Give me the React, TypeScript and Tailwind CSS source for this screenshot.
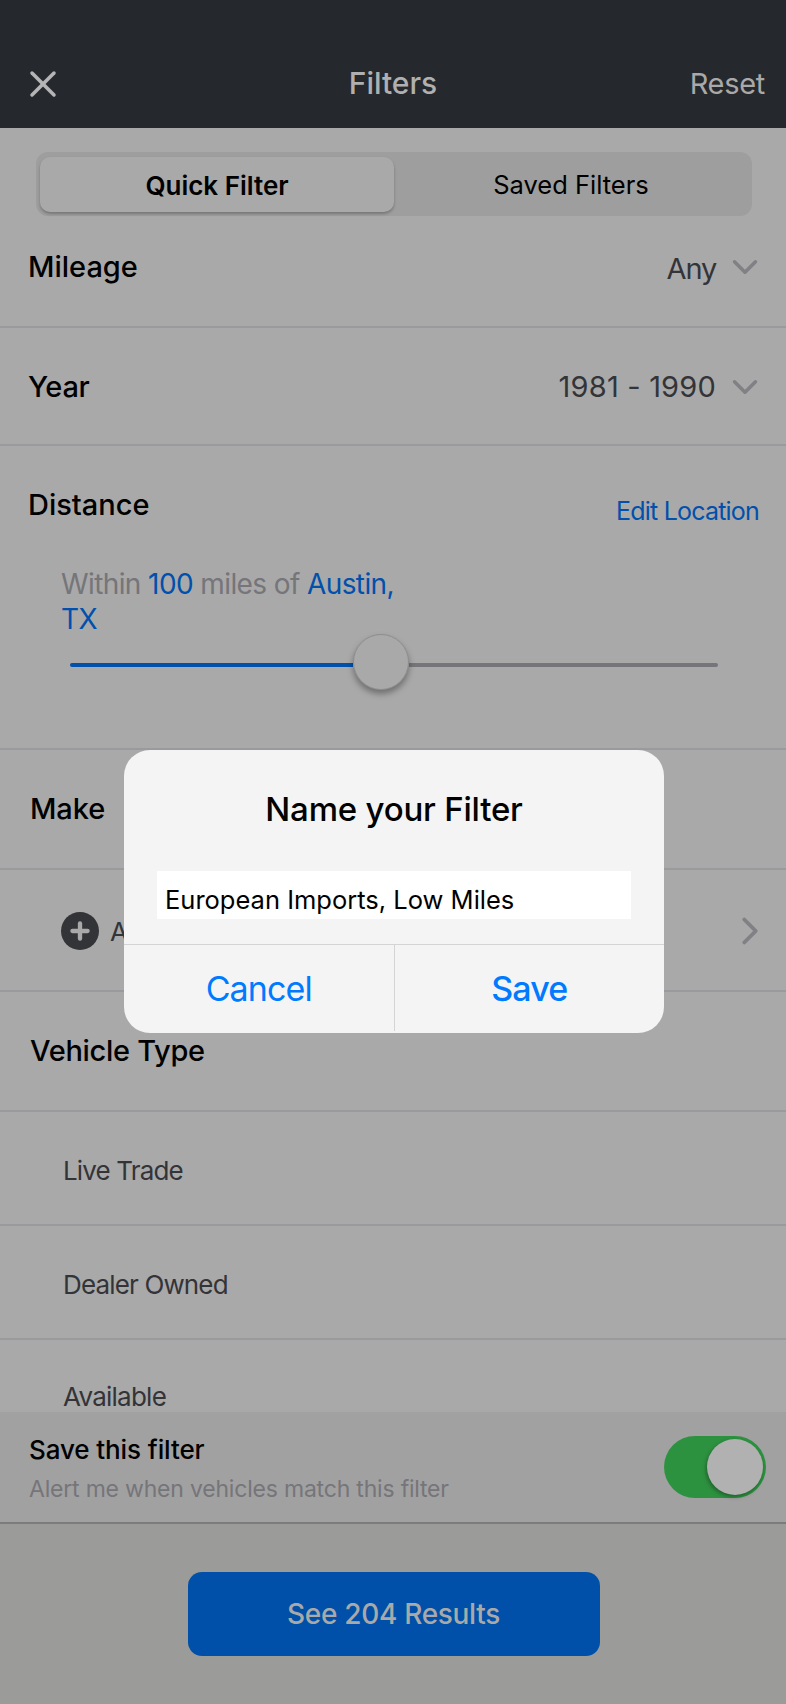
import { ChevronDown, ChevronRight, X, Plus } from "lucide-react";

function SubRow({ label, shifted }: { label: string; shifted?: boolean }) {
  return (
    <div className={shifted ? "flex h-[114px] shrink-0 items-center border-b-2 border-[#9a9a9e] pl-[63px] pt-[4px] text-[26px] tracking-[-0.85px] text-[#333438]" : "flex h-[114px] shrink-0 items-center border-b-2 border-[#9a9a9e] pl-[63px] text-[26px] tracking-[-0.75px] text-[#333438]"}>
      {label}
    </div>
  );
}

export default function App() {
  return (
    <div className="relative flex h-[1704px] w-[786px] flex-col overflow-hidden bg-[#a9a9a9] font-['Inter',sans-serif]">
      <header className="flex h-[128px] shrink-0 items-center justify-between bg-[#25282d] pl-[21px] pr-[21px] pt-[39px]">
        <div className="w-[110px]">
          <X size={44} strokeWidth={1.9} className="text-[#b5b5b5]" />
        </div>
        <span className="text-[30px] font-[450] text-[#b0b0b0]">Filters</span>
        <span className="w-[110px] text-right text-[29px] tracking-[-0.3px] text-[#a9a9a9]">Reset</span>
      </header>

      <main className="min-h-0 flex-1 overflow-hidden">
        <div className="ml-[36px] mr-[34px] mt-[24px] flex h-[64px] items-center rounded-[12px] bg-[#9e9e9e] px-[4px]">
          <div className="flex h-[55px] w-[354px] items-center justify-center rounded-[10px] bg-[#a9a9a9] pt-[3px] text-[26px] font-semibold text-black shadow-[0_2px_3px_rgba(0,0,0,0.25)]">
            Quick Filter
          </div>
          <div className="flex flex-1 items-center justify-center pt-[3px] text-[25.5px] text-black">Saved Filters</div>
        </div>

        <div className="flex h-[112px] items-center justify-between border-b-2 border-[#9a9a9e] pb-[8px] pl-[28px] pr-[20px]">
          <span className="text-[29px] font-[450] text-black">Mileage</span>
          <div className="flex items-center gap-[8px]">
            <span className="pt-[3px] text-[29px] tracking-[-1.2px] text-[#333438]">Any</span>
            <ChevronDown size={42} strokeWidth={2} className="text-[#808085]" />
          </div>
        </div>

        <div className="flex h-[118px] items-center justify-between border-b-2 border-[#9a9a9e] pl-[28px] pr-[20px] pt-[2px]">
          <span className="text-[29px] font-[450] tracking-[-0.3px] text-black">Year</span>
          <div className="flex items-center gap-[8px]">
            <span className="text-[29px] tracking-[0.2px] text-[#333438]">1981 - 1990</span>
            <ChevronDown size={42} strokeWidth={2} className="text-[#808085]" />
          </div>
        </div>

        <div className="h-[304px] border-b-2 border-[#9a9a9e] pt-[37px]">
          <div className="flex items-start justify-between pl-[28px] pr-[27px]">
            <span className="text-[29px] font-[450] text-black">Distance</span>
            <span className="mt-[10px] text-[25px] tracking-[-0.8px] text-[#0050ac]">Edit Location</span>
          </div>
          <p className="mt-[36px] w-[410px] pl-[61px] text-[28px] leading-[35px] tracking-[-0.6px] text-[#75757a]">
            Within <span className="text-[#0050ac]">100</span> miles of <span className="text-[#0050ac]">Austin, TX</span>
          </p>
          <div className="ml-[70px] mr-[68px] flex h-[56px] items-center">
            <div className="h-[4px] w-[283px] rounded-l-full bg-[#0050ac]" />
            <div className="size-[56px] shrink-0 -translate-y-[3px] rounded-full border border-[#8e8e8e] bg-[#a9a9a9] shadow-[0_4px_6px_rgba(0,0,0,0.35)]" />
            <div className="h-[4px] flex-1 rounded-r-full bg-[#75757a]" />
          </div>
        </div>

        <div className="flex h-[120px] items-center border-b-2 border-[#9a9a9e] pl-[30px] text-[29px] font-[450] tracking-[-0.1px] text-black">Make</div>

        <div className="flex h-[122px] items-center justify-between border-b-2 border-[#9a9a9e] pl-[61px] pr-[13px] pt-[2px]">
          <div className="flex items-center gap-[11px]">
            <span className="flex size-[38px] items-center justify-center rounded-full bg-[#333438]">
              <Plus size={26} strokeWidth={4} className="text-[#a9a9a9]" />
            </span>
            <span className="text-[26px] tracking-[-0.75px] text-[#333438]">Add Make</span>
          </div>
          <ChevronRight size={46} strokeWidth={2} className="text-[#808085]" />
        </div>

        <div className="flex h-[120px] items-center border-b-2 border-[#9a9a9e] pl-[30px] text-[29px] font-[450] tracking-[-0.3px] text-black">Vehicle Type</div>

        <SubRow label="Live Trade" shifted />
        <SubRow label="Dealer Owned" shifted />
        <SubRow label="Available" />
      </main>

      <section className="flex h-[112px] shrink-0 items-center justify-between border-b-2 border-[#7c7c7c] bg-[#a1a1a1] pl-[29px] pr-[20px]">
        <div className="pt-[2px]">
          <div className="text-[26px] font-[450] tracking-[-0.1px] text-black">Save this filter</div>
          <div className="mt-[3px] text-[23px] tracking-[-0.2px] text-[#75757a]">Alert me when vehicles match this filter</div>
        </div>
        <div className="flex h-[62px] w-[102px] items-center justify-end rounded-full bg-[#2d9240] pr-[3px]">
          <div className="size-[56px] rounded-full bg-[#b1b1b1] shadow-[-1px_2px_4px_rgba(0,0,0,0.35)]" />
        </div>
      </section>

      <footer className="flex h-[180px] shrink-0 justify-center bg-[#9b9b99] pl-[1px] pt-[48px]">
        <button type="button" className="h-[84px] w-[412px] rounded-[14px] bg-[#0050a9] text-[28px] font-[450] tracking-[-0.3px] text-[#a9a9a9]">
          See 204 Results
        </button>
      </footer>

      <div className="absolute left-[124px] top-[750px] w-[540px] overflow-hidden rounded-[26px] bg-[#f4f4f4]">
        <div className="flex h-[121px] items-center justify-center pb-[2px] text-[33px] font-[450] tracking-[-0.2px] text-black">Name your Filter</div>
        <div className="mx-[33px] flex h-[48px] items-center bg-white pl-[8px] pt-[10px] text-[25.5px] text-black">European Imports, Low Miles</div>
        <div className="mt-[25px] flex h-[89px] border-t border-[#d4d4d4] pb-[2px] text-[34px] tracking-[-0.9px] text-[#007aff]">
          <div className="flex flex-1 items-center justify-center border-r border-[#d4d4d4]">Cancel</div>
          <div className="flex flex-1 items-center justify-center font-[450]">Save</div>
        </div>
      </div>
    </div>
  );
}
